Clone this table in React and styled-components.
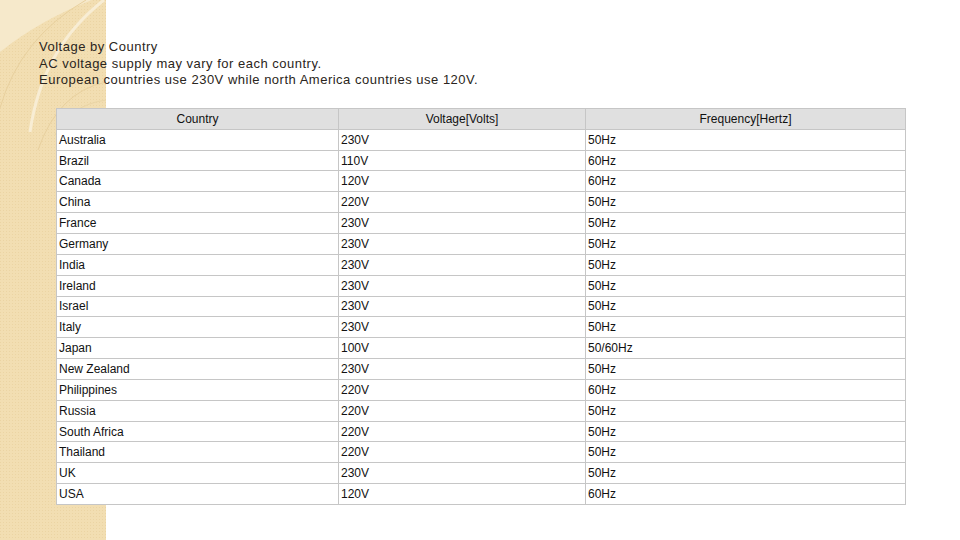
import React from 'react'
import styled, { createGlobalStyle } from 'styled-components'

const GlobalStyle = createGlobalStyle`
  html, body {
    margin: 0;
    padding: 0;
    background: #ffffff;
  }
`

const Page = styled.div`
  position: relative;
  width: 960px;
  height: 540px;
  overflow: hidden;
  background: #ffffff;
  font-family: "Liberation Sans", Arial, sans-serif;
`

const Decor = styled.svg`
  position: absolute;
  left: 0;
  top: 0;
  width: 106px;
  height: 540px;
`

const Content = styled.div`
  position: relative;
  padding: 39px 0 0 39px;
`

const Intro = styled.div`
  font-size: 13px;
  line-height: 16.6px;
  letter-spacing: 0.5px;
  color: #2a2520;
`

const Table = styled.table`
  margin: 19px 0 0 17px;
  width: 846px;
  border-collapse: collapse;
  font-size: 12px;
  color: #111;
  table-layout: fixed;
`

const HeadCell = styled.th`
  height: 20px;
  padding: 0;
  background: #e0e0e0;
  border: 1px solid #c6c6c6;
  font-weight: normal;
  text-align: center;
  width: ${(p) => p.$w}px;
`

const Cell = styled.td`
  height: 19.85px;
  padding: 0 0 0 2px;
  background: #ffffff;
  border: 1px solid #c6c6c6;
  white-space: nowrap;
`

const rows = [
  ['Australia', '230V', '50Hz'],
  ['Brazil', '110V', '60Hz'],
  ['Canada', '120V', '60Hz'],
  ['China', '220V', '50Hz'],
  ['France', '230V', '50Hz'],
  ['Germany', '230V', '50Hz'],
  ['India', '230V', '50Hz'],
  ['Ireland', '230V', '50Hz'],
  ['Israel', '230V', '50Hz'],
  ['Italy', '230V', '50Hz'],
  ['Japan', '100V', '50/60Hz'],
  ['New Zealand', '230V', '50Hz'],
  ['Philippines', '220V', '60Hz'],
  ['Russia', '220V', '50Hz'],
  ['South Africa', '220V', '50Hz'],
  ['Thailand', '220V', '50Hz'],
  ['UK', '230V', '50Hz'],
  ['USA', '120V', '60Hz'],
]

const Strip = () => (
  <Decor viewBox="0 0 106 540">
    <defs>
      <pattern id="dots" width="3" height="3" patternUnits="userSpaceOnUse">
        <rect width="3" height="3" fill="#f2deb2" />
        <rect width="1" height="1" fill="#ebd4a3" />
      </pattern>
    </defs>
    <rect width="106" height="540" fill="url(#dots)" />
    <path d="M0 0 H92 Q40 20 0 52 Z" fill="#f6e9cb" />
    <path d="M104 0 Q42 48 30 132" stroke="#f8edd4" strokeWidth="3" fill="none" />
    <path d="M86 0 Q20 38 0 108" stroke="#e8d09e" strokeWidth="1" fill="none" />
    <path d="M106 82 Q58 92 38 150" stroke="#e8d09e" strokeWidth="1" fill="none" />
    <path d="M106 100 Q70 105 55 135" stroke="#ead5a6" strokeWidth="1" fill="none" />
  </Decor>
)

const App = () => (
  <Page>
    <GlobalStyle />
    <Strip />
    <Content>
      <Intro>
        <div>Voltage by Country</div>
        <div>AC voltage supply may vary for each country.</div>
        <div>European countries use 230V while north America countries use 120V.</div>
      </Intro>
      <Table>
        <thead>
          <tr>
            <HeadCell $w={281}>Country</HeadCell>
            <HeadCell $w={246}>Voltage[Volts]</HeadCell>
            <HeadCell $w={319}>Frequency[Hertz]</HeadCell>
          </tr>
        </thead>
        <tbody>
          {rows.map((r) => (
            <tr key={r[0]}>
              <Cell>{r[0]}</Cell>
              <Cell>{r[1]}</Cell>
              <Cell>{r[2]}</Cell>
            </tr>
          ))}
        </tbody>
      </Table>
    </Content>
  </Page>
)

export default App
